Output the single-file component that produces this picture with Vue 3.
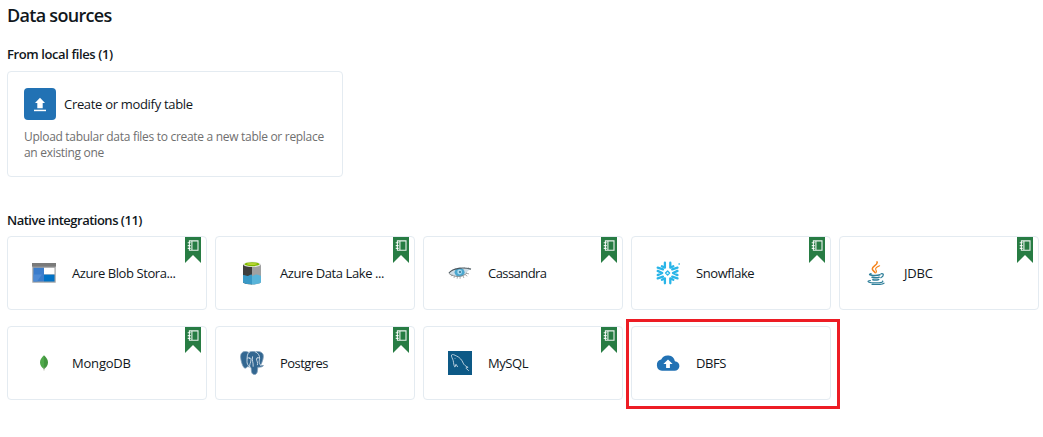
<script setup>
const integrations = [
  { id: 'blob', name: 'Azure Blob Stora...', notebook: true },
  { id: 'lake', name: 'Azure Data Lake ...', notebook: true },
  { id: 'cassandra', name: 'Cassandra', notebook: true },
  { id: 'snowflake', name: 'Snowflake', notebook: true },
  { id: 'jdbc', name: 'JDBC', notebook: true },
  { id: 'mongodb', name: 'MongoDB', notebook: true },
  { id: 'postgres', name: 'Postgres', notebook: true },
  { id: 'mysql', name: 'MySQL', notebook: true },
  { id: 'dbfs', name: 'DBFS', notebook: false, highlighted: true },
]
</script>

<template>
  <main class="page">
    <h1 class="title">Data sources</h1>

    <h2 class="heading local">From local files (1)</h2>
    <section class="upload">
      <div class="upload-head">
        <span class="upload-icon">
          <svg width="16" height="16" viewBox="0 0 16 16" fill="#fff">
            <path d="M8 1.800 13 7H10.700V12.300H5.300V7H3z" />
            <path d="M2 13.700h12v1.500H2z" />
          </svg>
        </span>
        <span class="upload-name">Create or modify table</span>
      </div>
      <p class="upload-text">Upload tabular data files to create a new table or replace<br />an existing one</p>
    </section>

    <h2 class="heading native">Native integrations (11)</h2>
    <section class="grid">
      <article v-for="item in integrations" :key="item.id" class="card">
        <svg v-if="item.id === 'blob'" class="logo" viewBox="0 0 24 24">
          <path d="M.3 2.500h23.400v19.200H.3z" fill="#a0a1a2" />
          <path d="M0 2h24v3.600H0z" fill="#7a7a7a" />
          <path d="M1.500 6.800H12v13.700H1.500z" fill="#3b7dcc" />
          <path d="M12 6.800h10.500v6.600H12z" fill="#fff" />
          <path d="M12 13.600h10.500v6.900H12z" fill="#0072c6" />
          <path d="M1.500 13.500H10L5 20.500H1.500z" fill="#4f8bd4" />
        </svg>
        <svg v-else-if="item.id === 'lake'" class="logo" viewBox="0 0 24 24">
          <path d="M3 3v18c0 1.400 4 2.400 9 2.400V3z" fill="#3e3e3e" />
          <path d="M12 3v20.400c5 0 9-1 9-2.400V3z" fill="#a0a1a2" />
          <path d="M3 14.200c2-.5 3 .8 4.500.8s2-1.400 4.500-1.400v9.800c-5 0-9-1-9-2.400z" fill="#3999c6" />
          <path d="M12 15.200c2-.2 2.800-1.700 4.600-1.700s2.700 1.500 4.400 1.200V21c0 1.400-4 2.400-9 2.400z" fill="#59b4d9" />
          <ellipse cx="12" cy="3.300" rx="9" ry="2.700" fill="#f0f0f0" />
          <ellipse cx="12" cy="3.200" rx="7.600" ry="2" fill="#7fba00" />
          <ellipse cx="12" cy="3" rx="5" ry="1" fill="#b8d432" />
        </svg>
        <svg v-else-if="item.id === 'cassandra'" class="logo" viewBox="0 0 24 24">
          <path d="M1.500 12.200C5 7.500 15 6 22.500 8.300c-2 .8-2.800 2-4 3.700-3.500 4.200-11.500 4.700-17 .2z" fill="#cfdde6" />
          <ellipse cx="11.600" cy="11.200" rx="5" ry="4.300" fill="#4ba7cf" />
          <circle cx="11.600" cy="11" r="2.400" fill="#a9daef" />
          <circle cx="12" cy="11" r="1" fill="#2b6f93" />
          <path d="M1 12C5 6.900 15 5.900 23 8.200" fill="none" stroke="#4b5860" stroke-width="1.200" />
          <path d="M.8 12.300C6 16.700 15 16.500 19 11.800" fill="none" stroke="#7c8286" stroke-width=".9" />
          <path d="m4.500 14.200-1.700.8m4 .3-1 1.700m3.700-1.300-.4 2m3-2v2.100m3-2.800.8 2m1.400-3.200 2 1.400m-.8-3 2.500.7M8 8 7 6.900m5 .2V6.200m4 .8.500-1m3 1.500 1.500-.8" stroke="#85898b" stroke-width=".7" />
        </svg>
        <svg v-else-if="item.id === 'snowflake'" class="logo" viewBox="0 0 24 24" fill="none" stroke="#29b5e8" stroke-width="2.300" stroke-linecap="round" stroke-linejoin="round">
          <path d="M8.900 1.700v5l-3-1.500M14.300 1.700v5l3-1.500M8.900 22.300v-5l-3 1.500M14.300 22.300v-5l3 1.500" />
          <path d="m1.700 6.700 5.300 1.600M21.500 6.700l-5.300 1.600M1.700 17.300l5.300-1.600M21.500 17.300l-5.300-1.600" />
          <path d="m1.700 9.900 4.500 2.100-4.500 2.100M21.500 9.900 17 12l4.500 2.100" />
          <path d="m11.600 10 2 2-2 2-2-2z" stroke-width="1.400" />
          <circle cx="23" cy="3" r=".5" stroke-width=".6" />
        </svg>
        <svg v-else-if="item.id === 'jdbc'" class="logo" viewBox="0 0 24 24" fill="none" stroke-linecap="round">
          <path d="M13 .8c1.700 3.200-5.600 4.400-4.600 7.500.4 1.400 2 2 2.700 3.500" stroke="#f58219" stroke-width="1.500" />
          <path d="M15.600 4.700c-3 1.300-4.500 2.400-3.800 4 .6 1.200 1.200 1.600.2 2.900" stroke="#f58219" stroke-width="1.100" />
          <path d="M7 12.800c-2 .7-2 1.100.5 1.400 3 .4 6.500.2 8.500-.4M8 16.200c2.200.7 5 .6 7.200 0M8.800 18.700c1.800.6 3.900.5 5.900-.1" stroke="#2f7f9a" stroke-width="1.500" />
          <path d="M17 12.800c3-.8 3.300 2.300-.2 3.900" stroke="#2f7f9a" stroke-width="1.200" />
          <path d="M6.500 19.500c-5 .8-2 2.400 5.500 2.400 4.500 0 8-.8 6.500-1.900M8 23.400c5 .4 10.500 0 12-1.200" stroke="#2f7f9a" stroke-width="1.100" />
        </svg>
        <svg v-else-if="item.id === 'mongodb'" class="logo" viewBox="0 0 24 24">
          <path d="M12 4.200c-2.500 2.300-4 4.500-4 7.300 0 3 1.700 5 4 6.700z" fill="#4fa84a" />
          <path d="M12 4.200c2.500 2.300 4 4.500 4 7.300 0 3-1.700 5-4 6.700z" fill="#43963f" />
          <path d="M12 16.500v3" stroke="#a8a999" stroke-width=".8" />
        </svg>
        <svg v-else-if="item.id === 'postgres'" class="logo" viewBox="0 0 24 24" stroke-linejoin="round" stroke-linecap="round">
          <path d="M6.800.7C2.500-.2.400 2.300.6 6c.2 3.500 2 10 4 11 1.200.5 2.100-.6 3.200-1.500l1.800.6c1.500-.3 1.600.7 1.700 2.700.1 2.600.7 4.700 3 4.700 2.400 0 3-1.800 3.200-4.300l.3-3c2.300.3 5.300-.5 5.700-1.600-.7-.4-2.200.1-3-.3 2-3.400 3.600-8.700 2.500-11C21.500.3 18-.1 15.400.8 12.600.2 10.600.3 9.200 1.200z" fill="#336791" stroke="#7f9db8" stroke-width=".8" />
          <path d="M9.200 1.200C6.800 3 7.200 6 7 10.500c0 2 .6 3.800 2.600 5.300M15.400.8c3 1.300 4.400 4 4.200 6.700-.2 2.300-1.300 3.600.9 6.800M7.200 7.300c2-1.300 4-.8 3.800 1.700-.2 3-1.700 4-1.400 7M19.600 7c-1.500-.8-3-.4-3.100.8-.2 1.900 2 4 1 6M12.500 5.800c-.8 4 1 5.500.7 9.500" fill="none" stroke="#d5e1eb" stroke-width=".9" />
          <circle cx="9.300" cy="7.400" r=".5" fill="#fff" />
          <circle cx="17.800" cy="7" r=".5" fill="#fff" />
        </svg>
        <svg v-else-if="item.id === 'mysql'" class="logo" viewBox="0 0 24 24">
          <path d="M0 0h24v24H0z" fill="#0d5986" />
          <path d="M6.900 15.800C5.500 14.800 5.700 11.500 5.200 9.600 4.700 7.800 3 5.300 3.500 4c.8-1.200 3.300.1 5 1 3.300 1.400 5.500 4 6.700 7.100.7 1.600 1.700 2.600 4.900 4.300-3 .1-2.700.8-1.400 1.400l1.800 1.700M6.900 15.800l1.100-2.500 1.500 2.400" fill="none" stroke="#b4ccdc" stroke-width="1" stroke-linecap="round" stroke-linejoin="round" />
          <circle cx="7" cy="7.200" r=".5" fill="#a9c4d7" />
        </svg>
        <svg v-else class="logo" viewBox="0 0 24 24">
          <path d="M18.900 10.300A7.300 7.300 0 0 0 5.200 8.500 5.700 5.700 0 0 0 6 19.700h12.500a4.700 4.700 0 0 0 .4-9.400zM13.900 13v4.100h-3.800V13H7.400L12 8.400l4.600 4.600z" fill="#2272b4" fill-rule="evenodd" />
        </svg>

        <span class="name" :class="'name-' + item.id">{{ item.name }}</span>

        <svg v-if="item.notebook" class="ribbon" width="16" height="26" viewBox="0 0 16 26">
          <path d="M0 0h16v26l-8-8-8 8z" fill="#277c43" />
          <path d="M4.400 3.900h8.600v9.400H4.400zM6.900 3.900v9.400" fill="none" stroke="#fff" stroke-opacity=".9" stroke-width="1.100" />
          <path d="M2.700 5.800h3M2.700 8.600h3M2.700 11.400h3" stroke="#fff" stroke-opacity=".9" stroke-width="1.100" />
        </svg>
        <span v-if="item.highlighted" class="highlight"></span>
      </article>
    </section>
  </main>
</template>

<style>
body {
  margin: 0;
  background: #fff;
}
</style>

<style scoped>
.page {
  box-sizing: border-box;
  width: 1043px;
  height: 437px;
  padding: 3px 4px 0 7px;
  overflow: hidden;
  background: #fff;
  color: #11171c;
  font-family: "Open Sans", "Noto Sans", sans-serif;
  font-size: 13px;
}
.title {
  margin: 0;
  font-size: 18px;
  line-height: 24px;
  font-weight: 600;
  letter-spacing: -0.7px;
}
.heading {
  margin: 0;
  font-size: 13px;
  line-height: 20px;
  font-weight: 600;
}
.local {
  margin-top: 17px;
  margin-bottom: 7px;
  letter-spacing: -0.4px;
}
.native {
  margin-top: 33px;
  margin-bottom: 6px;
  letter-spacing: -0.5px;
}
.upload {
  box-sizing: border-box;
  width: 336px;
  height: 106px;
  padding: 16px;
  border: 1px solid #e4ebf1;
  border-radius: 4px;
}
.upload-head {
  display: flex;
  align-items: center;
  gap: 8px;
}
.upload-icon {
  display: flex;
  align-items: center;
  justify-content: center;
  width: 32px;
  height: 32px;
  border-radius: 4px;
  background: #2272b4;
}
.upload-name {
  letter-spacing: -0.31px;
}
.upload-text {
  margin: 9px 0 0;
  color: #6f6f6f;
  font-size: 12px;
  line-height: 16px;
  letter-spacing: -0.3px;
  white-space: nowrap;
}
.grid {
  display: grid;
  grid-template-columns: repeat(5, 200px);
  grid-auto-rows: 74px;
  gap: 16px 8px;
}
.card {
  position: relative;
  box-sizing: border-box;
  display: flex;
  align-items: center;
  gap: 16px;
  padding-left: 24px;
  border: 1px solid #e4ebf1;
  border-radius: 4px;
}
.logo {
  flex: none;
  width: 24px;
  height: 24px;
}
.name {
  letter-spacing: -0.42px;
  white-space: nowrap;
}
.name-cassandra,
.name-postgres {
  letter-spacing: -0.55px;
}
.name-jdbc,
.name-mongodb {
  letter-spacing: -0.2px;
}
.ribbon {
  position: absolute;
  top: 0;
  right: 5px;
}
.highlight {
  position: absolute;
  top: -8px;
  left: -6px;
  box-sizing: border-box;
  width: 214px;
  height: 90px;
  border: 3px solid #ed1c24;
}
</style>
